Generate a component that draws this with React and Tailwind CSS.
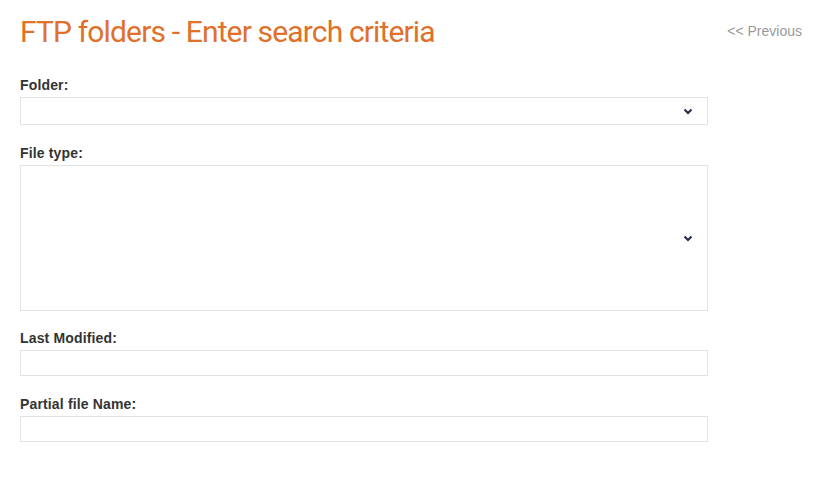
import { useState } from "react";

function Chevron() {
  return (
    <svg width="10" height="7" viewBox="0 0 10 7" className="shrink-0">
      <path d="M1.5 1.5 L5 5 L8.5 1.5" fill="none" stroke="#1f2a44" strokeWidth="2" />
    </svg>
  );
}

function Label({ children }) {
  return (
    <label className="block text-[14px] font-bold text-[#333] leading-[16px] tracking-[0.15px] mb-[4px] font-['Liberation_Sans',Arial,sans-serif]">
      {children}
    </label>
  );
}

export default function App() {
  const [lastModified, setLastModified] = useState("");
  const [partial, setPartial] = useState("");

  return (
    <div className="min-h-screen bg-white pl-5 pr-[11px] pt-[14px] font-['Liberation_Sans',Arial,sans-serif]">
      <div className="flex items-start justify-between">
        <h1 className="text-[30px] leading-[36px] tracking-[-0.85px] text-[#e0702a] font-['Roboto',sans-serif] font-normal">
          FTP folders - Enter search criteria
        </h1>
        <a href="#" className="text-[14px] text-[#999] mt-[9px] leading-[16px]">
          &lt;&lt; Previous
        </a>
      </div>

      <div className="w-[688px] mt-[27px]">
        <Label>Folder:</Label>
        <div className="h-[28px] border border-[#e3e3e3] flex items-center justify-end pr-[14px]">
          <Chevron />
        </div>

        <div className="mt-[20px]">
          <Label>File type:</Label>
          <div className="h-[146px] border border-[#e3e3e3] flex items-center justify-end pr-[14px]">
            <Chevron />
          </div>
        </div>

        <div className="mt-[19px]">
          <Label>Last Modified:</Label>
          <input
            value={lastModified}
            onChange={(e) => setLastModified(e.target.value)}
            className="block w-full h-[26px] border border-[#e3e3e3] outline-none px-2 text-[13px]"
          />
        </div>

        <div className="mt-[20px]">
          <Label>Partial file Name:</Label>
          <input
            value={partial}
            onChange={(e) => setPartial(e.target.value)}
            className="block w-full h-[26px] border border-[#e3e3e3] outline-none px-2 text-[13px]"
          />
        </div>
      </div>
    </div>
  );
}
